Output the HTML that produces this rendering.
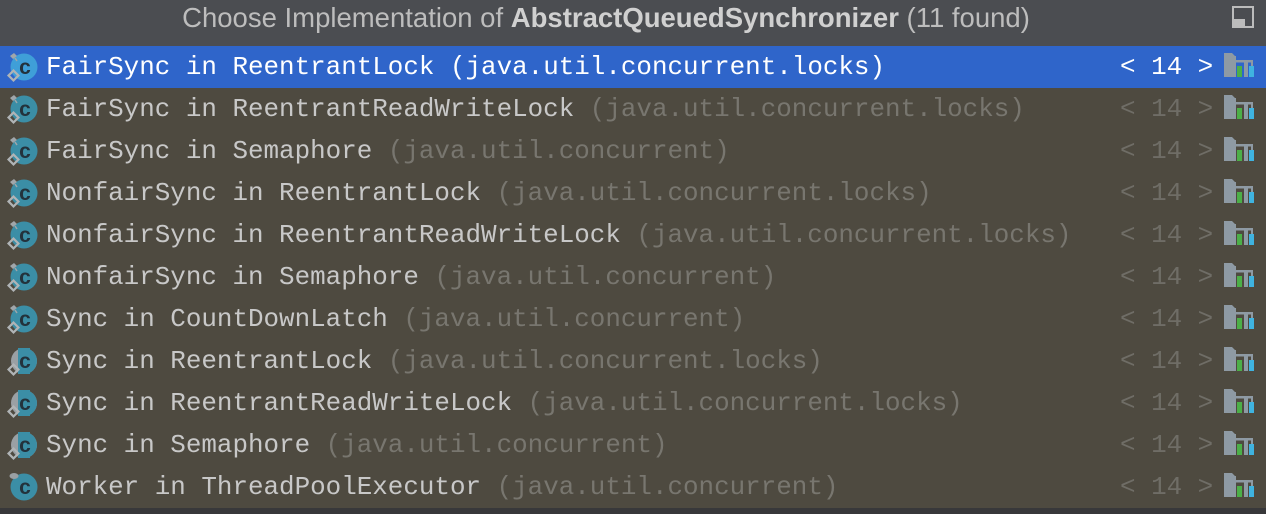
<!DOCTYPE html><html><head><style>
body{margin:0;width:1266px;height:514px;background:#4e4a40;overflow:hidden;font-family:"Liberation Mono",monospace}
.hd{height:46px;background:#4b4d51;position:relative}
.hd .t{position:absolute;left:0;width:1212px;text-align:center;top:2px;font:27.5px "Liberation Sans",sans-serif;color:#bdbdbd;white-space:nowrap}
.hd .t b{color:#d0d0d0}
.max{position:absolute;left:1232px;top:6px;width:22px;height:22px;border:2px solid #bcbcbc;box-sizing:border-box}
.max:after{content:"";position:absolute;left:0;bottom:0;width:11px;height:7px;background:#bcbcbc}
.r{height:42px;position:relative;color:#c8c8c8;font-size:25.9px;line-height:42px;white-space:nowrap}
.r .n{position:absolute;left:46px;top:0}
.r .p{color:#78766f}
.r .s{position:absolute;left:1120px;top:0;color:#6f6d66}
.r.sel{background:#2f65ca;color:#fff}
.r.sel .p{color:#fff}.r.sel .s{color:#fff}
.r svg{position:absolute}
.ic{left:4px;top:4px}
.fo{left:1224px;top:7px}
.bot{height:6px;background:#38383a}
</style></head><body>
<div class="hd"><div class="t">Choose Implementation of <b>AbstractQueuedSynchronizer</b> (11 found)</div><div class="max"></div></div>
<div id="rows"></div>
<div class="bot"></div>
<script>
var d=[["FairSync in ReentrantLock","(java.util.concurrent.locks)"],["FairSync in ReentrantReadWriteLock","(java.util.concurrent.locks)"],["FairSync in Semaphore","(java.util.concurrent)"],["NonfairSync in ReentrantLock","(java.util.concurrent.locks)"],["NonfairSync in ReentrantReadWriteLock","(java.util.concurrent.locks)"],["NonfairSync in Semaphore","(java.util.concurrent)"],["Sync in CountDownLatch","(java.util.concurrent)"],["Sync in ReentrantLock","(java.util.concurrent.locks)"],["Sync in ReentrantReadWriteLock","(java.util.concurrent.locks)"],["Sync in Semaphore","(java.util.concurrent)"],["Worker in ThreadPoolExecutor","(java.util.concurrent)"]];
var h="";d.forEach(function(x,i){var s=i==0,c=s?"#3f9fd8":"#3b8ea6";
var ab=(i>=7&&i<=9);
h+='<div class="r'+(s?' sel':'')+'"><svg class="ic" width="40" height="36" viewBox="0 0 40 36">'+
(ab?'<circle cx="20" cy="17" r="13" fill="#9aa0a4"/><rect x="14" y="4" width="12" height="26" fill="'+c+'"/><path d="M20 4a13 13 0 0 1 0 26z" fill="'+c+'"/><path d="M20 4a13 13 0 0 0 -6 1.5v23a13 13 0 0 0 6 1.5z" fill="'+c+'"/>':'<circle cx="20" cy="17" r="13.5" fill="'+c+'"/>')+
'<text x="21" y="24" text-anchor="middle" font-family="Liberation Sans,sans-serif" font-size="21" font-weight="bold" fill="#23323c">c</text>'+
(i<7?'<path d="M6 6l4-3 3 3-4 3z" fill="#a0a6aa"/><line x1="11" y1="8" x2="13" y2="11" stroke="#a0a6aa" stroke-width="1.5"/>':'')+
(i<10?'<rect x="6" y="22" width="7" height="7" transform="rotate(45 9.5 25.5)" fill="none" stroke="#b0b4b6" stroke-width="2.2"/>':'<ellipse cx="10" cy="6" rx="4.5" ry="3" fill="#9aa0a4"/>')+
'</svg><span class="n">'+x[0]+' <span class="p">'+x[1]+'</span></span><span class="s">&lt; 14 &gt;</span>'+
'<svg class="fo" width="32" height="26" viewBox="0 0 32 26"><path d="M0 0h8l3 3h1v21H0z" fill="#8e9aa4"/><rect x="12" y="7" width="17" height="2.5" fill="#8e9aa4"/><rect x="27" y="7" width="2" height="6" fill="#8e9aa4"/><rect x="13" y="13" width="5" height="11" fill="#4caf48"/><rect x="20" y="9" width="4" height="15" fill="#8e9aa4"/><rect x="25" y="13" width="5" height="11" fill="#3fb3e0"/></svg></div>';});
document.getElementById("rows").innerHTML=h;
</script>
</body></html>
